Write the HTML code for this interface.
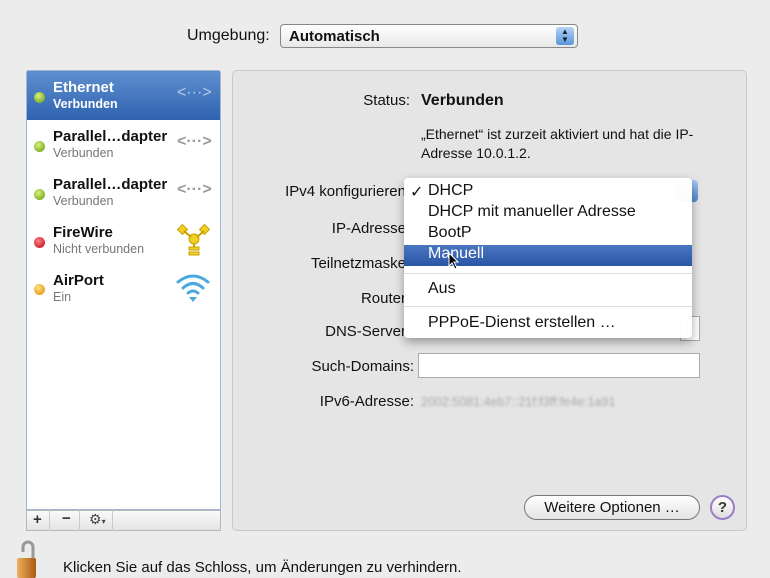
<!DOCTYPE html>
<html><head><meta charset="utf-8"><style>
*{margin:0;padding:0;box-sizing:border-box}
body{width:770px;height:578px;background:#ececec;font-family:"Liberation Sans",sans-serif;color:#111;position:relative;overflow:hidden;font-size:15px}
.a{position:absolute;white-space:nowrap}
.lbl{position:absolute;right:360px;text-align:right;font-size:15px}
.row .t{font-weight:bold;font-size:15px}
.row .s{font-size:12.5px;color:#777}
.dot{position:absolute;width:11px;height:11px;border-radius:50%;left:7px}
.m{font-size:16px}
</style></head><body>
<div class="a" style="left:187px;top:27px;font-size:16px">Umgebung:</div>
<div class="a" style="left:280px;top:24px;width:298px;height:24px;border:1px solid #888;border-radius:4px;background:linear-gradient(#fff,#e8e8e8);padding:3px 8px;font-weight:bold;font-size:15px">Automatisch
<div class="a" style="right:3px;top:2px;width:18px;height:18px;border-radius:3px;background:linear-gradient(#b5d3f5,#5b95d9);color:#123;font-size:8px;text-align:center;line-height:8px;padding-top:1px">▲<br>▼</div></div>

<!-- sidebar -->
<div class="a" style="left:26px;top:70px;width:195px;height:440px;background:#fff;border:1px solid #9fb6d4;border-radius:3px 3px 0 0"></div>
<div class="a" style="left:27px;top:71px;width:193px;height:49px;background:linear-gradient(#5f8fd0,#2f63b0)"></div>
<div class="a row" style="left:27px;top:78px;width:193px;height:48px">
<div class="dot" style="top:14px;background:radial-gradient(circle at 40% 35%,#d8f07a,#5a9a10)"></div>
<div class="a t" style="left:26px;top:1px;color:#fff">Ethernet</div><div class="a s" style="left:26px;top:19px;color:#fff;font-weight:bold">Verbunden</div>
<div class="a" style="left:150px;top:6px;color:#b8cbe6;font-size:16px">&lt;···&gt;</div></div>
<div class="a row" style="left:27px;top:127px;width:193px;height:48px">
<div class="dot" style="top:14px;background:radial-gradient(circle at 40% 35%,#d8f07a,#5a9a10)"></div>
<div class="a t" style="left:26px;top:1px">Parallel…dapter</div><div class="a s" style="left:26px;top:19px">Verbunden</div>
<div class="a" style="left:150px;top:6px;color:#999;font-size:16px;font-weight:bold">&lt;···&gt;</div></div>
<div class="a row" style="left:27px;top:175px;width:193px;height:48px">
<div class="dot" style="top:14px;background:radial-gradient(circle at 40% 35%,#d8f07a,#5a9a10)"></div>
<div class="a t" style="left:26px;top:1px">Parallel…dapter</div><div class="a s" style="left:26px;top:19px">Verbunden</div>
<div class="a" style="left:150px;top:6px;color:#999;font-size:16px;font-weight:bold">&lt;···&gt;</div></div>
<div class="a row" style="left:27px;top:223px;width:193px;height:48px">
<div class="dot" style="top:14px;background:radial-gradient(circle at 40% 35%,#ff8080,#c00010)"></div>
<div class="a t" style="left:26px;top:1px">FireWire</div><div class="a s" style="left:26px;top:19px">Nicht verbunden</div>
<svg class="a" style="left:150px;top:0" width="34" height="34"><g fill="#f0d020" stroke="#c8a000"><rect x="2" y="3" width="7" height="7" transform="rotate(45 5.5 6.5)"/><rect x="24" y="3" width="7" height="7" transform="rotate(45 27.5 6.5)"/><circle cx="17" cy="16" r="5"/><rect x="12" y="24" width="10" height="3"/><rect x="12" y="29" width="10" height="3"/></g><path d="M7 8 L14 14 M27 8 L20 14 M17 21 V24" stroke="#c8a000" stroke-width="2"/></svg></div>
<div class="a row" style="left:27px;top:272px;width:193px;height:48px">
<div class="dot" style="top:12px;background:radial-gradient(circle at 40% 35%,#ffe080,#e08a00)"></div>
<div class="a t" style="left:26px;top:0">AirPort</div><div class="a s" style="left:26px;top:18px">Ein</div>
<svg class="a" style="left:148px;top:0" width="36" height="32"><g fill="none" stroke="#4aa8e0" stroke-width="3" stroke-linecap="round"><path d="M3 10 Q18 -2 33 10"/><path d="M8 16 Q18 7 28 16"/><path d="M13 21 Q18 17 23 21"/></g><path d="M14 25 L22 25 L18 30Z" fill="#4aa8e0"/></svg></div>
<div class="a" style="left:26px;top:510px;width:195px;height:21px;background:linear-gradient(#fafafa,#e4e4e4);border:1px solid #b8b8b8"></div>
<div class="a" style="left:33px;top:511px;font-weight:bold;font-size:15px;color:#333">+</div>
<div class="a" style="left:49px;top:510px;height:21px;border-left:1px solid #ccc"></div>
<div class="a" style="left:62px;top:510px;font-weight:bold;font-size:15px;color:#333">−</div>
<div class="a" style="left:79px;top:510px;height:21px;border-left:1px solid #ccc"></div>
<div class="a" style="left:89px;top:511px;font-size:14px;color:#444">⚙<span style="font-size:8px">▾</span></div>
<div class="a" style="left:112px;top:510px;height:21px;border-left:1px solid #ccc"></div>

<!-- panel -->
<div class="a" style="left:232px;top:70px;width:515px;height:461px;background:#e5e5e5;border:1px solid #c8c8c8;border-radius:5px"></div>
<div class="lbl" style="top:92px">Status:</div>
<div class="a" style="left:421px;top:92px;font-weight:bold;font-size:16px">Verbunden</div>
<div class="a" style="left:421px;top:125px;font-size:14px;line-height:19px">„Ethernet“ ist zurzeit aktiviert und hat die IP-<br>Adresse 10.0.1.2.</div>
<div class="lbl" style="top:183px;right:364px">IPv4 konfigurieren</div>
<div class="lbl" style="top:220px;right:364px">IP-Adresse</div>
<div class="lbl" style="top:255px;right:364px">Teilnetzmaske</div>
<div class="lbl" style="top:290px;right:364px">Router</div>
<div class="lbl" style="top:323px;right:364px">DNS-Server</div>
<div class="lbl" style="top:358px;right:356px">Such-Domains:</div>
<div class="lbl" style="top:393px;right:356px">IPv6-Adresse:</div>
<div class="a" style="left:418px;top:353px;width:282px;height:25px;background:#fff;border:1px solid #aaa"></div>
<div class="a" style="left:680px;top:316px;width:20px;height:25px;background:#fff;border:1px solid #aaa"></div>
<div class="a" style="left:676px;top:180px;width:22px;height:22px;border-radius:4px;background:linear-gradient(#a9cbf3,#4d89d6)"></div>
<div class="a" style="left:421px;top:395px;font-size:12.5px;color:#aaa;filter:blur(1.2px)">2002:5081:4eb7::21f:f3ff:fe4e:1a91</div>

<!-- menu -->
<div class="a" style="left:404px;top:178px;width:288px;height:160px;background:rgba(255,255,255,.97);border-radius:4px;box-shadow:0 4px 10px rgba(0,0,0,.35)"></div>
<div class="a m" style="left:410px;top:182px">✓</div>
<div class="a m" style="left:428px;top:182px">DHCP</div>
<div class="a m" style="left:428px;top:203px">DHCP mit manueller Adresse</div>
<div class="a m" style="left:428px;top:224px">BootP</div>
<div class="a" style="left:404px;top:245px;width:288px;height:21px;background:linear-gradient(#4b76c0,#2a55a6)"></div>
<div class="a m" style="left:428px;top:245px;color:#fff">Manuell</div>
<svg class="a" style="left:448px;top:252px" width="12" height="18"><path d="M1 1 L1 14 L4 11 L7 17 L9 16 L6 10 L10 10Z" fill="#000" stroke="#fff" stroke-width="1"/></svg>
<div class="a" style="left:404px;top:273px;width:288px;border-top:1px solid #ddd"></div>
<div class="a m" style="left:428px;top:280px">Aus</div>
<div class="a" style="left:404px;top:306px;width:288px;border-top:1px solid #ddd"></div>
<div class="a m" style="left:428px;top:314px">PPPoE-Dienst erstellen …</div>

<div class="a" style="left:524px;top:495px;width:176px;height:25px;border:1px solid #777;border-radius:13px;background:linear-gradient(#fff,#e4e4e4);text-align:center;line-height:23px;font-size:15px">Weitere Optionen …</div>
<div class="a" style="left:710px;top:495px;width:25px;height:25px;border:2px solid #9a7fc8;border-radius:50%;background:linear-gradient(#fff,#ddd);text-align:center;line-height:21px;font-weight:bold;font-size:15px;color:#333">?</div>

<svg class="a" style="left:14px;top:540px" width="26" height="38"><defs><linearGradient id="g"><stop offset="0" stop-color="#f0b060"/><stop offset="1" stop-color="#a85a10"/></linearGradient></defs><path d="M19 18 V7 A5 5 0 0 0 9 7 V12" fill="none" stroke="#999" stroke-width="3"/><rect x="3" y="18" width="19" height="20" rx="2" fill="url(#g)"/></svg>
<div class="a" style="left:63px;top:559px;font-size:15px">Klicken Sie auf das Schloss, um Änderungen zu verhindern.</div>
</body></html>
